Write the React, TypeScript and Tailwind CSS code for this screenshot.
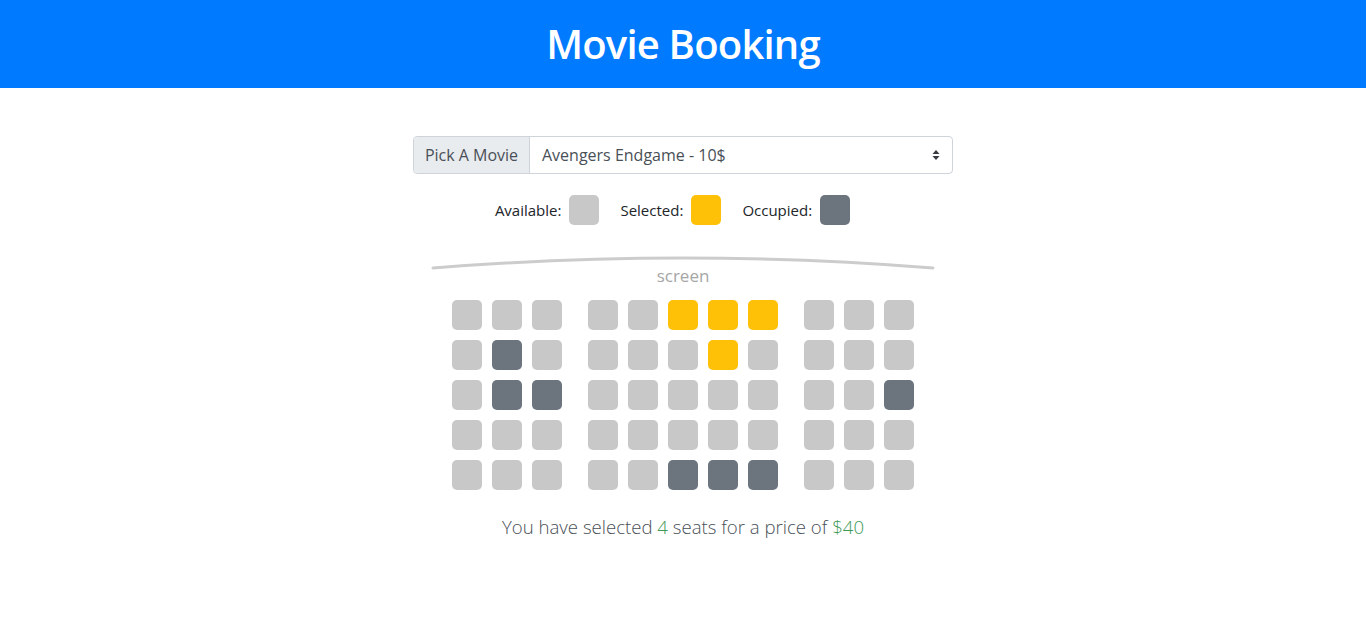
import React from "react";

type S = 0 | 1 | 2; // 0 available, 1 selected, 2 occupied

const rows: S[][] = [
  [0, 0, 0, 0, 0, 1, 1, 1, 0, 0, 0],
  [0, 2, 0, 0, 0, 0, 1, 0, 0, 0, 0],
  [0, 2, 2, 0, 0, 0, 0, 0, 0, 0, 2],
  [0, 0, 0, 0, 0, 0, 0, 0, 0, 0, 0],
  [0, 0, 0, 0, 0, 2, 2, 2, 0, 0, 0],
];

function Seat({ s }: { s: S }) {
  const cls =
    s === 1 ? "bg-[#ffc107]" : s === 2 ? "bg-[#6c757d]" : "bg-[#c8c8c8]";
  return <div className={`w-[30px] h-[30px] rounded-[5px] ${cls}`} />;
}

export default function App() {
  const font = { fontFamily: '"Open Sans", "Noto Sans", Arial, sans-serif' };
  return (
    <div className="min-h-[625px] bg-white text-[#212529]" style={font}>
      <header className="h-[88px] bg-[#007bff] flex items-center justify-center">
        <h1 className="text-white text-[40px] font-semibold leading-none tracking-[-0.8px]">
          Movie Booking
        </h1>
      </header>

      <div className="flex flex-col items-center pt-[48px]">
        <div className="w-[540px] h-[38px] flex border border-[#ced4da] rounded-[4px] text-[16px] text-[#495057]">
          <div className="w-[116px] shrink-0 bg-[#e9ecef] border-r border-[#ced4da] flex items-center justify-center rounded-l-[4px]">
            Pick A Movie
          </div>
          <div className="flex-1 flex items-center justify-between pl-[12px] pr-[12px]">
            <span>Avengers Endgame - 10$</span>
            <svg width="8" height="12" viewBox="0 0 8 12">
              <path d="M4 1 L7.5 5 H0.5 Z" fill="#343a40" />
              <path d="M4 11 L7.5 7 H0.5 Z" fill="#343a40" />
            </svg>
          </div>
        </div>

        <div className="mt-[21px] pr-[21px] flex items-center text-[15px] text-[#212529]">
          <span>Available:</span>
          <div className="ml-[8px] w-[30px] h-[30px] rounded-[5px] bg-[#c8c8c8]" />
          <span className="ml-[21px]">Selected:</span>
          <div className="ml-[8px] w-[30px] h-[30px] rounded-[5px] bg-[#ffc107]" />
          <span className="ml-[21px]">Occupied:</span>
          <div className="ml-[8px] w-[30px] h-[30px] rounded-[5px] bg-[#6c757d]" />
        </div>

        <div className="mt-[30px] w-[504px] flex flex-col items-center">
          <svg width="504" height="16" viewBox="0 0 504 16" className="block">
            <path
              d="M2 13 Q252 -7 502 13"
              stroke="#cccccc"
              strokeWidth="3"
              fill="none"
              strokeLinecap="round"
            />
          </svg>
          <div className="text-[#a6a6a6] text-[17px] leading-none -mt-[4px]">screen</div>
        </div>

        <div className="mt-[16px] flex flex-col gap-[10px]">
          {rows.map((r, i) => (
            <div key={i} className="flex gap-[26px]">
              <div className="flex gap-[10px]">
                {r.slice(0, 3).map((s, j) => (
                  <Seat key={j} s={s} />
                ))}
              </div>
              <div className="flex gap-[10px]">
                {r.slice(3, 8).map((s, j) => (
                  <Seat key={j} s={s} />
                ))}
              </div>
              <div className="flex gap-[10px]">
                {r.slice(8).map((s, j) => (
                  <Seat key={j} s={s} />
                ))}
              </div>
            </div>
          ))}
        </div>

        <p className="mt-[23px] text-[18.6px] font-light text-[#495057]">
          You have selected <span className="text-[#3f9a58]">4</span> seats for a price of{" "}
          <span className="text-[#3f9a58]">$40</span>
        </p>
      </div>
    </div>
  );
}
